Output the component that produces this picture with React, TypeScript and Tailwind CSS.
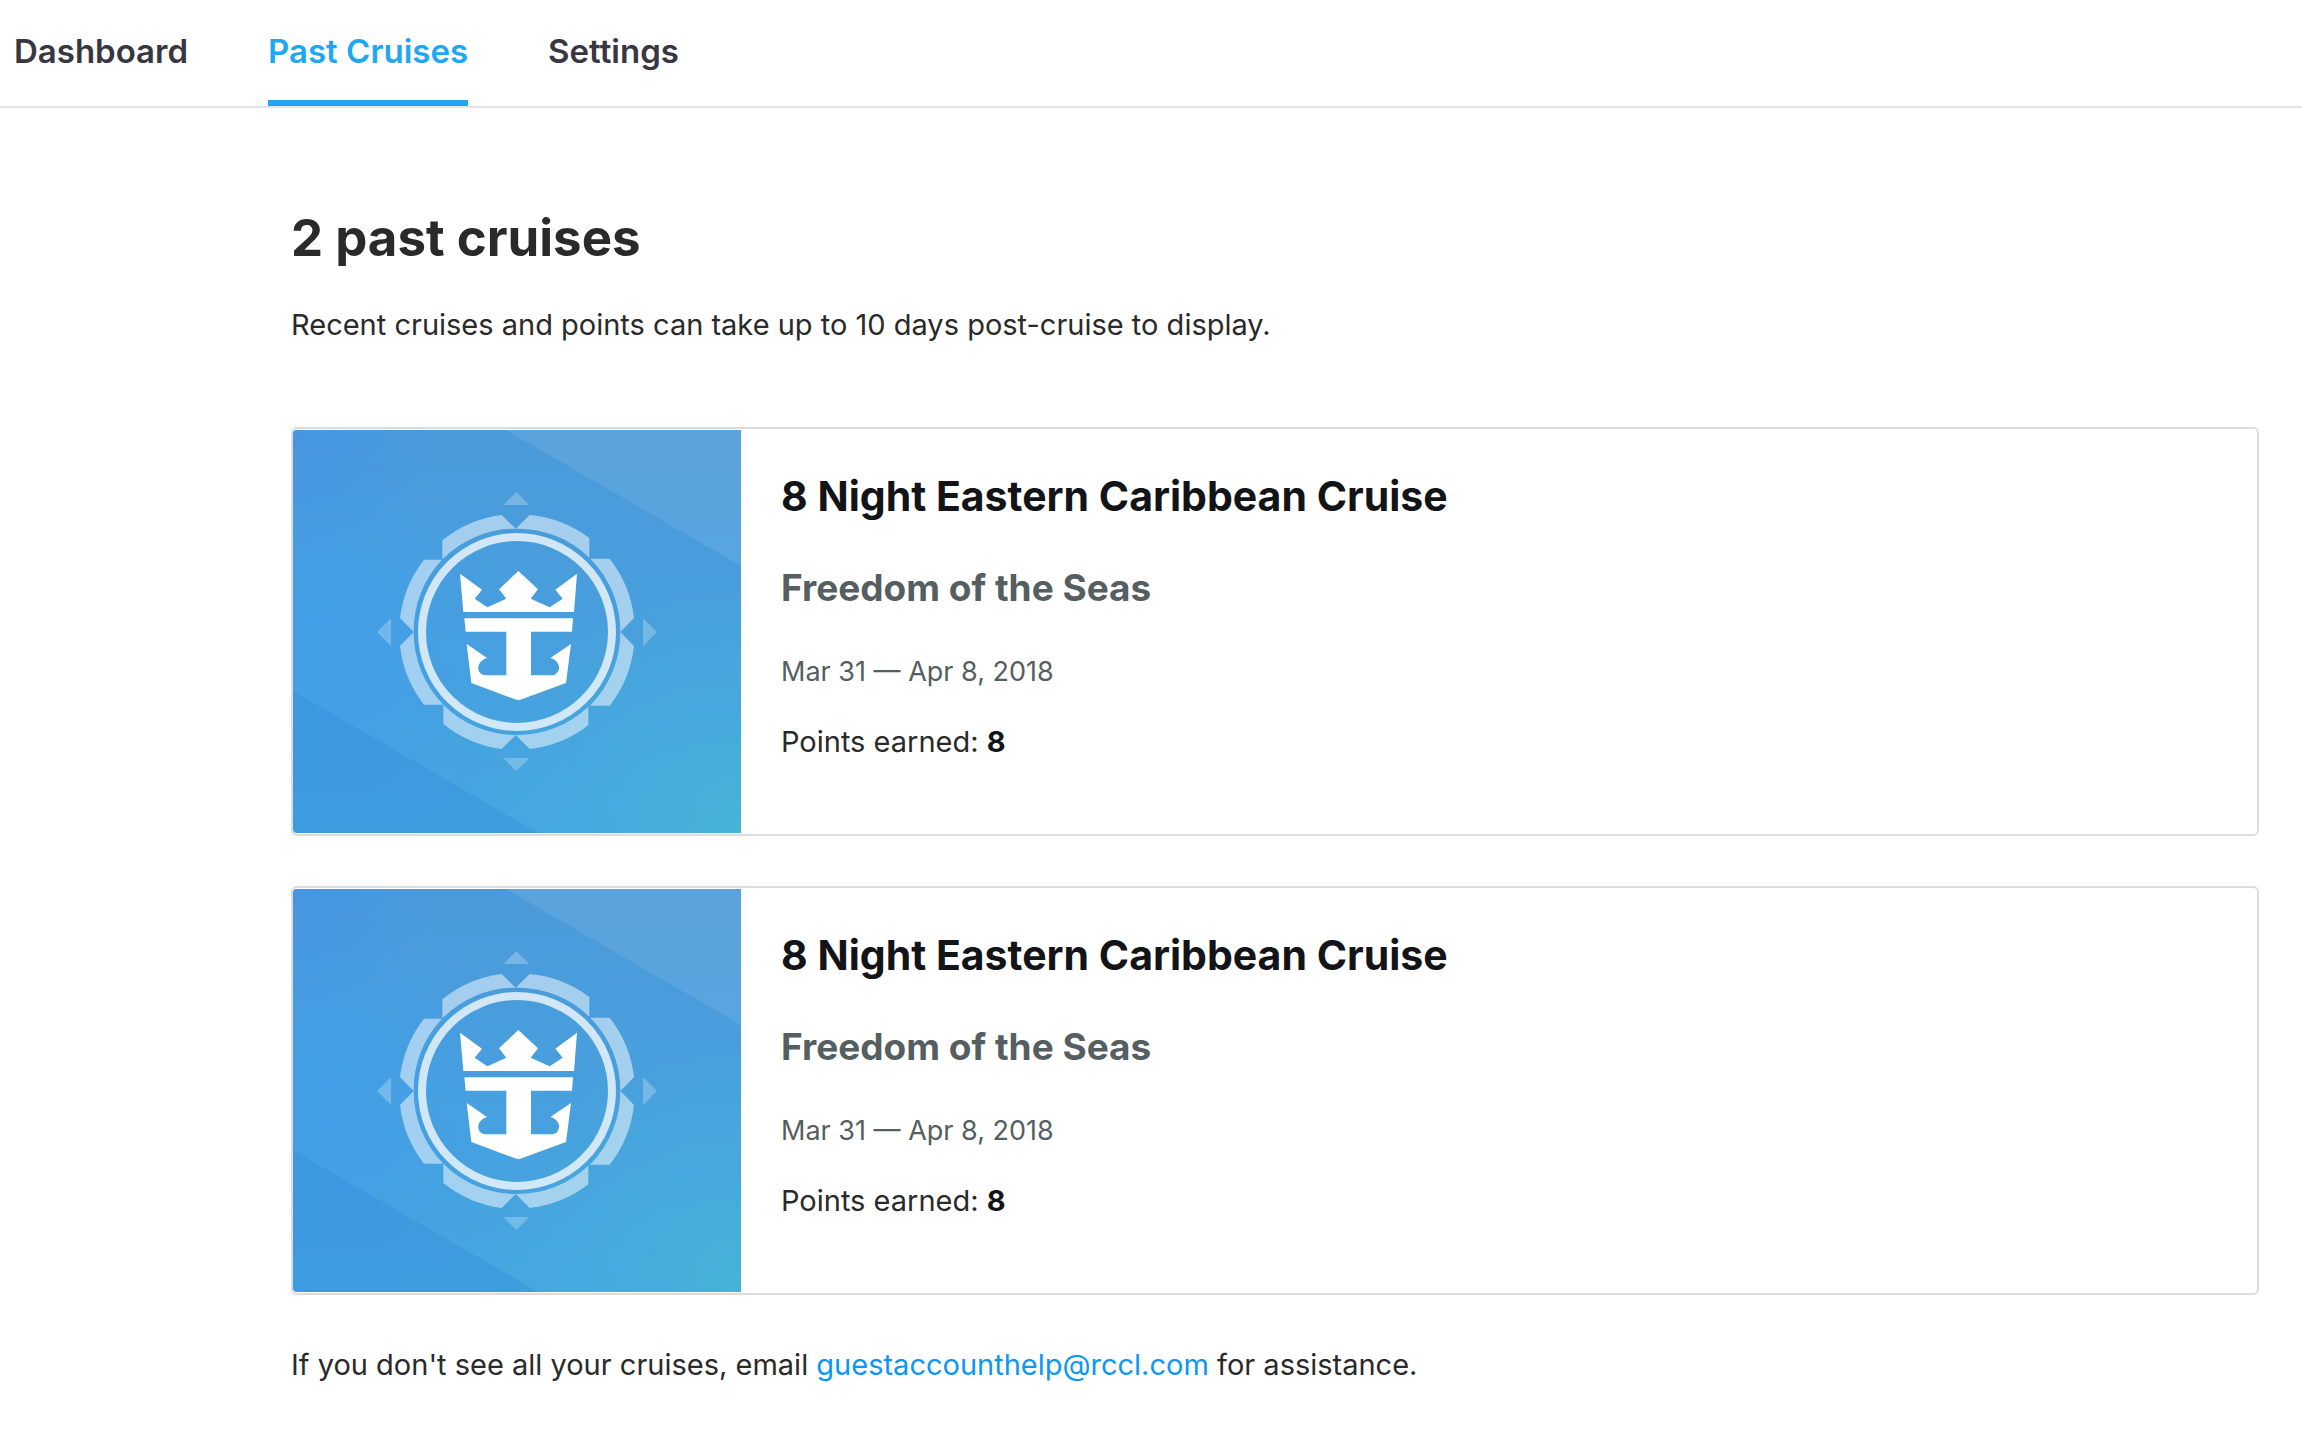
import React from "react";

const tabs = [
  { label: "Dashboard", active: false },
  { label: "Past Cruises", active: true },
  { label: "Settings", active: false },
];

const cruises = [
  { id: 1, title: "8 Night Eastern Caribbean Cruise", ship: "Freedom of the Seas", dates: "Mar 31 — Apr 8, 2018", points: 8 },
  { id: 2, title: "8 Night Eastern Caribbean Cruise", ship: "Freedom of the Seas", dates: "Mar 31 — Apr 8, 2018", points: 8 },
];

function CrownAnchorArt({ id }: { id: number }) {
  return (
    <svg
      viewBox="39 30 1344 1209"
      preserveAspectRatio="xMidYMid slice"
      className="my-px w-[448px] shrink-0 rounded-l-sm"
      role="img"
      aria-label="Crown and anchor emblem"
    >
      <defs>
        <linearGradient id={`base-${id}`} x1="0" y1="0" x2="0" y2="1">
          <stop offset="0" stopColor="#4b9ada" />
          <stop offset="0.5" stopColor="#489fdd" />
          <stop offset="1" stopColor="#44a7e1" />
        </linearGradient>
        <radialGradient id={`corner-${id}`} gradientUnits="userSpaceOnUse" cx="1383" cy="1239" r="760">
          <stop offset="0" stopColor="#46b3d7" />
          <stop offset="0.4" stopColor="#46b0da" stopOpacity="0.6" />
          <stop offset="1" stopColor="#46b0da" stopOpacity="0" />
        </radialGradient>
        <radialGradient id={`left-${id}`} gradientUnits="userSpaceOnUse" cx="100" cy="680" r="640">
          <stop offset="0" stopColor="#429fe8" />
          <stop offset="1" stopColor="#429fe8" stopOpacity="0" />
        </radialGradient>
        <radialGradient id={`top-${id}`} gradientUnits="userSpaceOnUse" cx="39" cy="30" r="420">
          <stop offset="0" stopColor="#4496e1" />
          <stop offset="1" stopColor="#4496e1" stopOpacity="0" />
        </radialGradient>
      </defs>
      <rect x="39" y="30" width="1344" height="1209" fill={`url(#base-${id})`} />
      <rect x="39" y="30" width="1344" height="1209" fill={`url(#corner-${id})`} />
      <rect x="39" y="30" width="1344" height="1209" fill={`url(#left-${id})`} />
      <rect x="39" y="30" width="1344" height="1209" fill={`url(#top-${id})`} />
      <path d="M678 30 1383 438V30Z" fill="#fff" fillOpacity="0.09" />
      <path d="M39 814 775 1239H39Z" fill="#2a86d6" fillOpacity="0.28" />

      <g fill="#fff" fillOpacity="0.25">
        <path d="M709 216 748 255H670Z" />
        <path d="M670 1014H748L709 1053Z" />
        <path d="M291 636 333 595V678Z" />
        <path d="M1131 636 1089 595V678Z" />
      </g>
      <g fill="#fff" fillOpacity="0.5">
        <path d="M707 326 749 285A352 352 0 0 1 928 354V413A310 310 0 0 0 707 326Z" />
        <path d="M931 416H989A352 352 0 0 1 1062 594L1021 636A310 310 0 0 0 931 416Z" />
        <path d="M1021 636 1062 678A352 352 0 0 1 989 857H930A310 310 0 0 0 1021 636Z" />
        <path d="M925 860V916A352 352 0 0 1 749 987L707 945A310 310 0 0 0 925 860Z" />
        <path d="M707 945 665 987A352 352 0 0 1 490 912V854A310 310 0 0 0 707 945Z" />
        <path d="M490 854H432A352 352 0 0 1 360 678L401 636A310 310 0 0 0 490 854Z" />
        <path d="M401 636 360 594A352 352 0 0 1 432 419H486A310 310 0 0 0 401 636Z" />
        <path d="M487 418V361A352 352 0 0 1 665 285L707 326A310 310 0 0 0 487 418Z" />
      </g>
      <circle cx="711" cy="636" r="285" fill="none" stroke="#fff" strokeOpacity="0.75" strokeWidth="24" />
      <g fill="#fff">
        <path d="M540 461 606 509 584 536 622 562 679 536 657 508 715 453 774 508 752 536 809 562 848 536 826 509 891 461 882 576H550Z" />
        <path d="M553 595H879L876 635H753V766H812C836 766 842 742 834 731Q826 717 811 714L873 672 858 789 725 838Q715 843 705 838L574 789 560 672 621 714Q604 719 597 733C590 750 600 766 620 766H679V635H557Z" />
      </g>
    </svg>
  );
}

export default function App() {
  return (
    <div className="min-h-screen bg-white font-['Inter',sans-serif] text-[29px] leading-10 text-[#2a2a2a]">
      <nav className="flex gap-20 border-b-2 border-[#e4e4e4] pl-[14px]">
        {tabs.map((tab) => (
          <a
            key={tab.label}
            href="#"
            aria-current={tab.active ? "page" : undefined}
            className={
              tab.active
                ? "border-b-6 border-[#1ea7f2] pt-8 pb-[30px] text-[33px] leading-[38px] font-semibold text-[#1ea7f2]"
                : "border-b-6 border-transparent pt-8 pb-[30px] text-[33px] leading-[38px] font-semibold text-[#373641]"
            }
          >
            {tab.label}
          </a>
        ))}
      </nav>

      <main className="mr-[43px] ml-[291px] pt-[100px]">
        <h1 className="text-[51px] leading-[60px] font-bold">2 past cruises</h1>
        <p className="mt-[37px]">Recent cruises and points can take up to 10 days post-cruise to display.</p>

        <ul className="mt-[82px] flex flex-col gap-[50px]">
          {cruises.map((cruise) => (
            <li key={cruise.id} className="flex overflow-hidden rounded-md border-2 border-[#dcdcdc]">
              <CrownAnchorArt id={cruise.id} />
              <div className="min-w-0 flex-1 pt-[43px] pl-10">
                <h2 className="text-[41px] leading-[48px] font-bold text-[#131417]">{cruise.title}</h2>
                <p className="mt-[46px] text-[37px] leading-[44px] font-bold text-[#555e60]">{cruise.ship}</p>
                <p className="mt-[42px] text-[27px] text-[#555e60]">{cruise.dates}</p>
                <p className="mt-[30px]">
                  Points earned: <strong className="font-bold text-[#131417]">{cruise.points}</strong>
                </p>
              </div>
            </li>
          ))}
        </ul>

        <p className="mt-[50px]">
          If you don't see all your cruises, email{" "}
          <a href="mailto:guestaccounthelp@rccl.com" className="text-[#0c96f5]">
            guestaccounthelp@rccl.com
          </a>{" "}
          for assistance.
        </p>
      </main>
    </div>
  );
}
